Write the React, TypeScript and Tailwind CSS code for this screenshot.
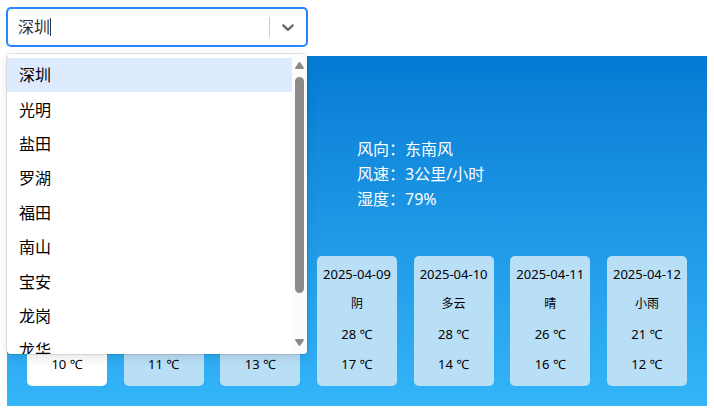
const districts = ["深圳", "光明", "盐田", "罗湖", "福田", "南山", "宝安", "龙岗", "龙华"];

interface Day {
  date?: string;
  weather?: string;
  high?: number;
  low: number;
}

const days: Day[] = [
  { low: 10 },
  { low: 11 },
  { low: 13 },
  { date: "2025-04-09", weather: "阴", high: 28, low: 17 },
  { date: "2025-04-10", weather: "多云", high: 28, low: 14 },
  { date: "2025-04-11", weather: "晴", high: 26, low: 16 },
  { date: "2025-04-12", weather: "小雨", high: 21, low: 12 },
];

const details = [
  { label: "风向", value: "东南风" },
  { label: "风速", value: "3公里/小时" },
  { label: "湿度", value: "79%" },
];

function CitySelect() {
  return (
    <div className="relative w-[300px]">
      <div className="flex h-[38px] items-center rounded border border-[#2684ff] bg-white shadow-[0_0_0_1px_#2684ff]">
        <div className="flex flex-1 items-center pl-2.5">
          <input
            aria-label="城市"
            role="combobox"
            aria-expanded="true"
            aria-controls="city-options"
            defaultValue="深圳"
            className="h-6 w-8 bg-transparent p-0 text-[#333333] caret-transparent outline-none"
          />
          <span className="h-[18px] w-px bg-[#333333]" />
        </div>
        <span className="h-5 w-px bg-[#cccccc]" />
        <button type="button" aria-label="展开" className="p-2 text-[#666666]">
          <svg width="20" height="20" viewBox="0 0 20 20" fill="currentColor">
            <path d="M4.516 7.548c0.436-0.446 1.043-0.481 1.576 0l3.908 3.747 3.908-3.747c0.533-0.481 1.141-0.446 1.574 0 0.436 0.445 0.408 1.197 0 1.615-0.406 0.418-4.695 4.502-4.695 4.502-0.217 0.223-0.502 0.335-0.787 0.335s-0.57-0.112-0.789-0.335c0 0-4.287-4.084-4.695-4.502s-0.436-1.17 0-1.615z" />
          </svg>
        </button>
      </div>

      <div className="absolute top-full left-0 z-10 mt-2 flex h-[300px] w-full overflow-hidden rounded bg-white shadow-[0_0_0_1px_rgba(0,0,0,0.1),0_4px_11px_rgba(0,0,0,0.1)]">
        <ul id="city-options" role="listbox" className="mt-1 grid h-[344px] flex-1 grid-rows-10 text-black">
          {districts.map((name, i) => (
            <li
              key={name}
              role="option"
              aria-selected={i === 0}
              className={i === 0 ? "flex items-center bg-[#deebff] px-3" : "flex items-center px-3"}
            >
              {name}
            </li>
          ))}
        </ul>
        <div className="flex w-[15px] flex-col items-center bg-[#fcfcfc] pt-2 pb-2 text-[#8b8b8b]">
          <svg width="9" height="7" viewBox="0 0 9 7" fill="currentColor">
            <path d="M3.7 0.5Q4.5 -0.4 5.3 0.5L8.8 5.6Q9.2 7 8 7H1Q-0.2 7 0.2 5.6Z" />
          </svg>
          <div className="mt-2 h-[216px] w-[9px] rounded-full bg-[#8b8b8b]" />
          <svg width="9" height="7" viewBox="0 0 9 7" fill="currentColor" className="mt-auto">
            <path d="M3.7 6.5Q4.5 7.4 5.3 6.5L8.8 1.4Q9.2 0 8 0H1Q-0.2 0 0.2 1.4Z" />
          </svg>
        </div>
      </div>
    </div>
  );
}

function DayCard({ day, today }: { day: Day; today: boolean }) {
  return (
    <li
      className={`flex h-[130px] w-20 flex-col justify-end rounded-[5px] pb-[7px] text-center text-[13px] leading-[30px] whitespace-nowrap text-black ${today ? "bg-white" : "bg-[#b9dff6]"}`}
    >
      {day.date && <time>{day.date}</time>}
      {day.weather && <span className="text-xs leading-[30px]">{day.weather}</span>}
      {day.high !== undefined && <span>{day.high} ℃</span>}
      <span>{day.low} ℃</span>
    </li>
  );
}

export default function App() {
  return (
    <main className="px-[7px] pt-2 pb-[5px] font-['Noto_Sans','Noto_Sans_CJK_SC',sans-serif] text-base">
      <CitySelect />
      <section className="mt-2.5 flex h-[350px] flex-col bg-linear-to-b from-[#047bd3] to-[#34b5f8] p-5">
        <dl className="ml-[50%] flex-1 pt-[61px] leading-[25px] text-white">
          {details.map((item) => (
            <div key={item.label} className="flex">
              <dt>{item.label}：</dt>
              <dd>{item.value}</dd>
            </div>
          ))}
        </dl>
        <ul className="flex justify-between">
          {days.map((day, i) => (
            <DayCard key={i} day={day} today={i === 0} />
          ))}
        </ul>
      </section>
    </main>
  );
}
